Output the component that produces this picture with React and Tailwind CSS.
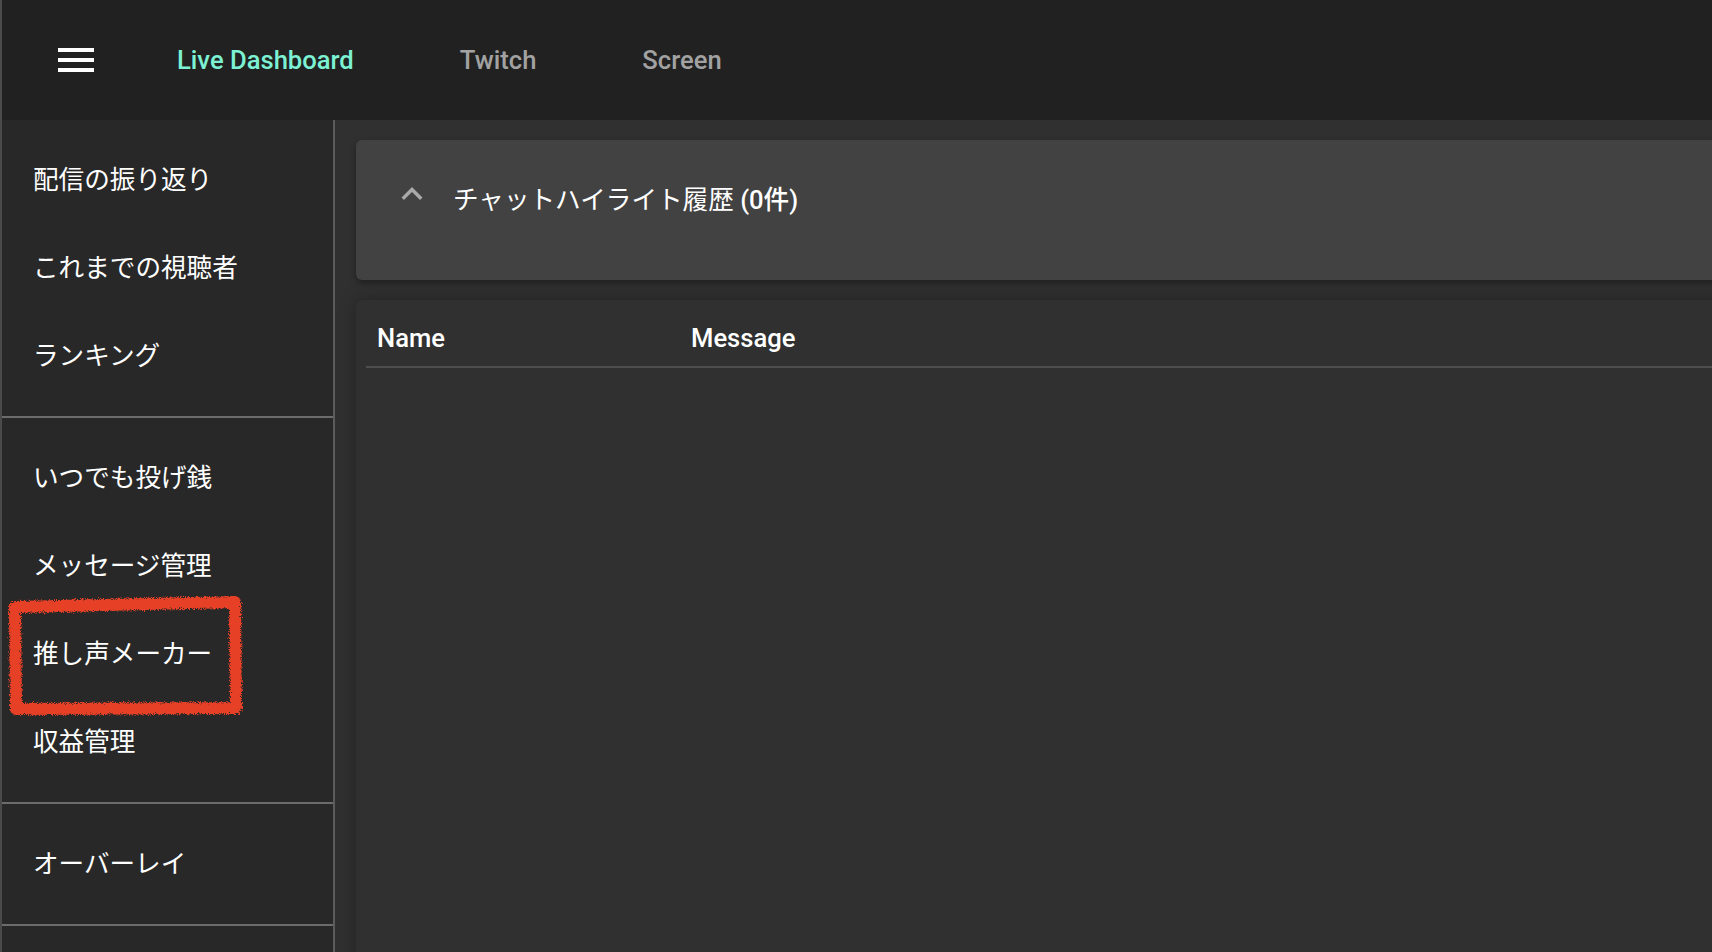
const font = { fontFamily: "Roboto, 'Noto Sans CJK JP', sans-serif" }

const sections = [
  ['配信の振り返り', 'これまでの視聴者', 'ランキング'],
  ['いつでも投げ銭', 'メッセージ管理', '推し声メーカー', '収益管理'],
  ['オーバーレイ'],
]

function HighlightBox() {
  // hand-drawn red marker box around the item
  return (
    <svg
      className="absolute left-[5px] -top-[14px] pointer-events-none"
      width="236"
      height="120"
      viewBox="0 0 236 120"
    >
      <defs>
        <filter id="rough" x="-10%" y="-10%" width="120%" height="120%">
          <feTurbulence type="fractalNoise" baseFrequency="1.2" numOctaves="3" seed="7" />
          <feDisplacementMap in="SourceGraphic" scale="6" />
        </filter>
      </defs>
      <path
        d="M8 11 L228 6 L229 112 L9 113 Z"
        fill="none"
        stroke="#e63f26"
        strokeWidth="12"
        strokeLinejoin="round"
        filter="url(#rough)"
      />
    </svg>
  )
}

function Sidebar() {
  return (
    <aside className="w-[333px] shrink-0 bg-[#282828] border-r-2 border-[#5b5b5b] flex flex-col">
      {sections.map((items, i) => (
        <div key={i} className="py-4 border-b-2 border-[#6c6c6c]">
          {items.map((label) => (
            <div
              key={label}
              className="relative h-[88px] flex items-center pl-[31px] text-white text-[25.6px]"
            >
              {label === '推し声メーカー' && <HighlightBox />}
              <span className="relative">{label}</span>
            </div>
          ))}
        </div>
      ))}
      <div className="flex-1" />
    </aside>
  )
}

export default function App() {
  return (
    <div
      className="h-screen w-full overflow-hidden flex flex-col border-l-2 border-[#4b4b4b] bg-[#303030]"
      style={font}
    >
      {/* Top bar */}
      <header className="h-[120px] shrink-0 bg-[#212121] flex items-center">
        <div className="ml-[56px] flex flex-col gap-[6px]">
          <div className="w-[36px] h-[4px] bg-white" />
          <div className="w-[36px] h-[4px] bg-white" />
          <div className="w-[36px] h-[4px] bg-white" />
        </div>
        <nav className="ml-[83px] flex items-center gap-[106px] text-[25.6px] font-medium">
          <span className="text-[#7cf1d3]">Live Dashboard</span>
          <span className="text-[#a2a2a2]">Twitch</span>
          <span className="text-[#a2a2a2]">Screen</span>
        </nav>
      </header>

      <div className="flex flex-1 min-h-0">
        <Sidebar />

        <main className="flex-1 min-w-0 overflow-hidden pl-[21px] pt-5">
          <div className="w-[1420px] flex flex-col gap-5">
            {/* Accordion */}
            <section className="h-[140px] bg-[#424242] rounded-md shadow-[0_3px_6px_rgba(0,0,0,0.35)] flex flex-col">
              <div className="h-[120px] flex items-center pl-[35px]">
                <svg className="mb-[12px]" width="42" height="42" viewBox="0 0 24 24" fill="#a9a9a9">
                  <path d="M12 8l-6 6 1.41 1.41L12 10.83l4.59 4.58L18 14z" />
                </svg>
                <h2 className="ml-[20px] text-white text-[25.6px] font-normal">
                  チャットハイライト履歴 <span className="font-medium">(0件)</span>
                </h2>
              </div>
            </section>

            {/* Highlight table */}
            <section className="h-[700px] bg-[#303030] rounded-md shadow-[0_0_18px_rgba(0,0,0,0.28)] p-[10px]">
              <div className="h-[58px] flex items-center border-b-2 border-[#4e4e4e] text-white font-medium text-[25.6px]">
                <div className="w-[315px] pl-[11px]">Name</div>
                <div className="pl-[10px]">Message</div>
              </div>
            </section>
          </div>
        </main>
      </div>
    </div>
  )
}
